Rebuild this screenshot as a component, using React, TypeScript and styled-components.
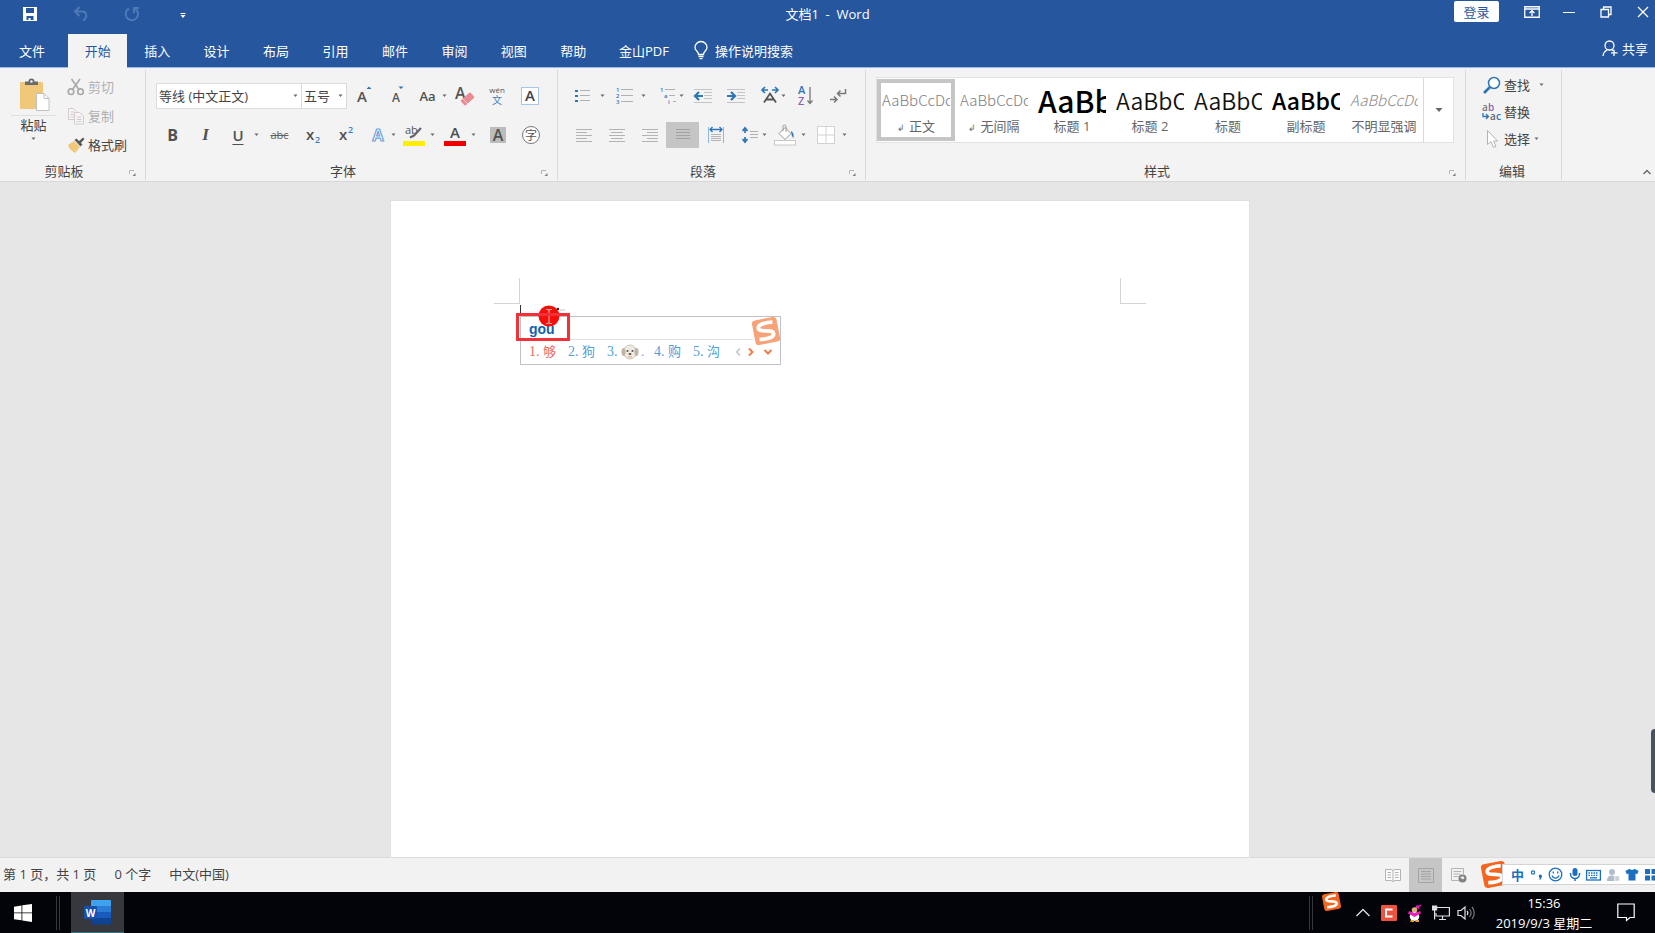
import React from 'react';
import styled, { createGlobalStyle, css } from 'styled-components';

const BLUE = '#26579e';
const INK = '#444444';
const UI = '"Open Sans", "Noto Sans CJK SC", sans-serif';
const SAMPLE = '"Noto Sans CJK SC", sans-serif';

const GlobalStyle = createGlobalStyle`
  * { box-sizing: border-box; }
  html, body { margin: 0; padding: 0; }
  body { font-family: ${UI}; font-size: 13px; line-height: 18px; color: ${INK}; overflow: hidden; }
  button, select, input { font: inherit; color: inherit; margin: 0; padding: 0; border: 0; background: none; }
  svg { display: block; flex: none; overflow: visible; }
`;

const Shell = styled.div`
  display: flex;
  flex-direction: column;
  min-height: 100vh;
`;

/* ---------- title bar ---------- */

const TitleBar = styled.header`
  display: grid;
  grid-template-columns: 1fr auto 1fr;
  height: 34px;
  background: ${BLUE};
  color: #ffffff;
`;
const QuickAccess = styled.div`
  display: flex;
  align-items: center;
  padding: 0 0 6px 4px;
`;
const QuickButton = styled.button<{ $dim?: boolean }>`
  display: flex;
  align-items: center;
  justify-content: center;
  width: 51px;
  height: 24px;
  color: ${(p) => (p.$dim ? '#4f79b6' : '#ffffff')};
`;
const DocTitle = styled.h1`
  margin: 0;
  padding: 5px 0;
  font-size: 13px;
  line-height: 18px;
  font-weight: 400;
  white-space: pre;
`;
const WindowControls = styled.div`
  display: flex;
  align-items: flex-start;
  justify-content: flex-end;
`;
const LoginButton = styled.button`
  width: 45px;
  height: 21px;
  margin: 1px 14px 0 0;
  border-radius: 2px;
  background: #ffffff;
  color: ${BLUE};
  line-height: 20px;
`;
const WindowButton = styled.button`
  display: flex;
  align-items: center;
  justify-content: center;
  width: 37px;
  height: 24px;
  &:last-child { width: 31px; padding-left: 6px; }
`;

/* ---------- tabs ---------- */

const TabBar = styled.nav`
  display: flex;
  height: 34px;
  background: ${BLUE};
  border-bottom: 1px solid #9dbbe0;
  color: #ffffff;
`;
const FileTab = styled.button`
  width: 64px;
  margin-right: 4px;
`;
const TabList = styled.div`
  display: grid;
  grid-template-columns: repeat(9, 1fr);
  width: 535px;
`;
const Tab = styled.button<{ $active?: boolean }>`
  ${(p) =>
    p.$active &&
    css`
      background: #f3f3f3;
      color: ${BLUE};
      margin-bottom: -1px;
      padding-bottom: 1px;
    `}
`;
const WideTab = styled.button`
  width: 82px;
`;
const TellMe = styled.button`
  display: flex;
  align-items: center;
  gap: 7px;
  padding: 0 0 0 9px;
`;
const ShareButton = styled.button`
  display: flex;
  align-items: center;
  gap: 4px;
  margin-left: auto;
  padding: 0 7px 4px 0;
`;

/* ---------- ribbon ---------- */

const Ribbon = styled.section`
  display: flex;
  height: 114px;
  padding: 2px 0 1px;
  background: #f3f3f3;
  border-bottom: 1px solid #d8d8d8;
`;
const Group = styled.div<{ $w?: number }>`
  display: flex;
  flex-direction: column;
  ${(p) => (p.$w ? `width: ${p.$w}px; flex: none;` : 'flex: 1; min-width: 0;')}
  border-right: 1px solid #d9d9d9;
`;
const GroupBody = styled.div`
  display: flex;
  flex: 1;
`;
const GroupFooter = styled.div`
  display: flex;
  align-items: center;
  height: 18px;
  padding-right: 3px;
`;
const GroupLabel = styled.span`
  flex: 1;
  line-height: 16px;
  text-align: center;
`;
const Launcher = styled.button`
  display: flex;
  align-items: flex-end;
  width: 14px;
  height: 12px;
`;
const RibbonEnd = styled.div`
  display: flex;
  align-items: flex-end;
  justify-content: flex-end;
  width: 93px;
  padding: 0 4px 5px 0;
`;

const PasteButton = styled.button`
  display: flex;
  flex-direction: column;
  align-items: center;
  width: 45px;
  height: 70px;
  margin: 8px 10px 0 11px;
`;
const PasteText = styled.span`
  width: 100%;
  margin: 4px 0 3px;
  border-top: 1px solid #dedede;
`;
const Stack = styled.div<{ $pitch: number; $top: number }>`
  display: flex;
  flex-direction: column;
  align-items: flex-start;
  padding-top: ${(p) => p.$top}px;
  > button { height: ${(p) => p.$pitch}px; }
`;
const TextButton = styled.button<{ $disabled?: boolean }>`
  display: flex;
  align-items: center;
  gap: 2px;
  color: ${(p) => (p.$disabled ? '#b0b0b0' : INK)};
`;
const IconSlot = styled.span`
  display: flex;
  justify-content: center;
  width: 20px;
`;
const CaretSlot = styled.span<{ $pad?: number }>`
  padding-left: ${(p) => p.$pad ?? 0}px;
`;

const Rows = styled.div<{ $left: number }>`
  display: flex;
  flex-direction: column;
  gap: 13px;
  padding: 13px 0 0 ${(p) => p.$left}px;
`;
const Row = styled.div`
  display: flex;
  align-items: center;
  height: 26px;
`;
const Combo = styled.label<{ $w: number }>`
  position: relative;
  display: flex;
  align-items: center;
  width: ${(p) => p.$w}px;
  height: 26px;
  background: #ffffff;
  border: 1px solid #dcdcdc;
  & + & { border-left: 0; }
  select {
    width: 100%;
    height: 24px;
    padding-left: 2px;
    appearance: none;
    outline: 0;
  }
  svg {
    position: absolute;
    right: 3px;
    top: 10px;
    pointer-events: none;
  }
`;
const ToolButton = styled.button<{ $w?: number; $gap?: number; $on?: boolean }>`
  display: flex;
  flex: none;
  align-items: center;
  justify-content: center;
  width: ${(p) => p.$w ?? 33}px;
  height: 26px;
  margin-left: ${(p) => p.$gap ?? 0}px;
  background: ${(p) => (p.$on ? '#c5c5c5' : 'transparent')};
`;
const Glyph = styled.span`
  display: flex;
  flex: 1;
  justify-content: center;
`;
const Letter = styled.span<{ $size?: number; $bold?: boolean; $italic?: boolean; $line?: string }>`
  font-size: ${(p) => p.$size ?? 16}px;
  font-weight: ${(p) => (p.$bold ? 700 : 600)};
  font-style: ${(p) => (p.$italic ? 'italic' : 'normal')};
  font-family: ${(p) => (p.$italic ? '"Liberation Serif", serif' : UI)};
  text-decoration: ${(p) => p.$line ?? 'none'};
  text-decoration-thickness: 1px;
  text-underline-offset: 3px;
  color: #505050;
`;
const ThinLetter = styled(Letter)`
  font-weight: 400;
  color: #606060;
`;

/* ---------- styles gallery ---------- */

const Gallery = styled.div`
  display: flex;
  flex: 1;
  height: 66px;
  margin: 7px 11px 0 10px;
  background: #ffffff;
  border: 1px solid #e2e2e2;
`;
const StyleList = styled.div`
  display: grid;
  grid-template-columns: repeat(7, 1fr);
  flex: 1;
  min-width: 0;
  padding: 1px 0 3px;
`;
const StyleCard = styled.button<{ $selected?: boolean }>`
  display: flex;
  flex-direction: column;
  align-items: center;
  min-width: 0;
  padding: 0 1px;
  border: 4px solid ${(p) => (p.$selected ? '#c5c5c5' : 'transparent')};
`;
const StyleSample = styled.span<{ $size: number; $tone: string; $italic?: boolean; $weight?: number }>`
  width: 100%;
  height: 34px;
  overflow: hidden;
  font-family: ${SAMPLE};
  font-size: ${(p) => p.$size}px;
  line-height: 34px;
  font-weight: ${(p) => p.$weight ?? 400};
  font-style: ${(p) => (p.$italic ? 'italic' : 'normal')};
  color: ${(p) => p.$tone};
  text-align: left;
  white-space: nowrap;
`;
const StyleName = styled.span`
  color: #666666;
  white-space: nowrap;
`;
const Mark = styled.small`
  margin-right: 4px;
  font-size: 9px;
`;
const GalleryMore = styled.button`
  display: flex;
  align-items: center;
  justify-content: center;
  width: 30px;
  border-left: 1px solid #d9d9d9;
`;

/* ---------- document ---------- */

const Workspace = styled.main`
  position: relative;
  display: flex;
  flex: 1;
  justify-content: center;
  padding: 18px 15px 0 0;
  background: #e6e6e6;
`;
const Page = styled.article`
  position: relative;
  width: 860px;
  background: #ffffff;
  border: 1px solid #e0e0e0;
  border-bottom: 0;
`;
const Margins = styled.div`
  display: flex;
  justify-content: space-between;
  padding: 77px 103px 0;
`;
const Corner = styled.span<{ $side: 'left' | 'right' }>`
  width: 26px;
  height: 26px;
  border-bottom: 1px solid #d4d4d4;
  border-${(p) => (p.$side === 'left' ? 'right' : 'left')}: 1px solid #d4d4d4;
`;
const TextCursor = styled.span`
  position: absolute;
  left: 129px;
  top: 104px;
  width: 1px;
  height: 20px;
  background: #333333;
`;
const ImePanel = styled.div`
  position: absolute;
  left: 129px;
  top: 115px;
  width: 261px;
  height: 49px;
  border: 1px solid #bfc0c8;
  background: #ffffff;
`;
const ImeInput = styled.div`
  height: 23px;
  margin: 0 27px 0 2px;
  padding: 3px 0 0 6px;
  border-bottom: 1px solid #e0e0e0;
  font: 700 14px/18px "Liberation Sans", sans-serif;
  color: #1260ae;
`;
const ImeLogo = styled.span`
  position: absolute;
  right: 0;
  top: 0;
  opacity: 0.6;
`;
const Candidates = styled.div`
  display: flex;
  align-items: center;
  height: 24px;
  padding-left: 8px;
`;
const Candidate = styled.button<{ $first?: boolean; $w?: number }>`
  display: flex;
  align-items: center;
  width: ${(p) => p.$w ?? 39}px;
  gap: 2px;
  font-family: "Liberation Serif", "Noto Sans CJK SC", serif;
  font-size: 13px;
  color: ${(p) => (p.$first ? '#ee6a5c' : '#4f9fd9')};
`;
const Num = styled.span`
  width: 12px;
  font-size: 14px;
  text-align: left;
`;
const Pager = styled.button<{ $w: number }>`
  display: flex;
  width: ${(p) => p.$w}px;
`;
const Highlight = styled.div`
  position: absolute;
  left: 125px;
  top: 112px;
  width: 54px;
  height: 28px;
  border: 3px solid #f23037;
`;
const Pointer = styled.span`
  position: absolute;
  left: 147px;
  top: 104px;
`;
const SideHandle = styled.button`
  position: absolute;
  right: 0;
  bottom: 64px;
  width: 4px;
  height: 64px;
  border-radius: 4px 0 0 4px;
  background: #465362;
`;

/* ---------- status bar ---------- */

const StatusBar = styled.footer`
  position: relative;
  display: flex;
  align-items: center;
  height: 35px;
  padding-left: 3px;
  background: #f2f2f2;
  border-top: 1px solid #dadada;
`;
const StatusText = styled.span`
  margin-right: 18px;
  padding-bottom: 2px;
`;
const Views = styled.div`
  display: flex;
  align-self: stretch;
  margin-left: auto;
  padding-right: 180px;
`;
const ViewButton = styled.button<{ $on?: boolean }>`
  display: flex;
  align-items: center;
  justify-content: center;
  width: 33px;
  background: ${(p) => (p.$on ? '#c6c6c6' : 'transparent')};
`;
const ImeBar = styled.div`
  position: absolute;
  right: 0;
  top: 2px;
  display: flex;
  align-items: center;
  width: 174px;
  height: 29px;
`;
const ImeBarBody = styled.div`
  display: flex;
  align-items: center;
  flex: 1;
  height: 21px;
  margin-left: -6px;
  background: #ffffff;
  border: 1px solid #d4d4d4;
  border-right: 0;
  overflow: hidden;
`;
const ImeBarButton = styled.button<{ $first?: boolean }>`
  display: flex;
  flex: none;
  align-items: center;
  justify-content: center;
  width: 19px;
  height: 19px;
  margin-left: ${(p) => (p.$first ? 5 : 0)}px;
  font-size: 13px;
  font-weight: 700;
  color: #1b6fc0;
`;

/* ---------- task bar ---------- */

const TaskBar = styled.footer`
  display: flex;
  height: 41px;
  background: #02040a;
  color: #ffffff;
`;
const StartButton = styled.button`
  display: flex;
  align-items: center;
  justify-content: center;
  width: 46px;
`;
const Grip = styled.span`
  width: 4px;
  margin: 4px 0 3px 10px;
  border: 1px solid #35373c;
  border-width: 0 1px;
`;
const TaskButton = styled.button`
  display: flex;
  align-items: center;
  justify-content: center;
  width: 53px;
  margin-left: 11px;
  background: #36383d;
  border-bottom: 1px solid #2f7480;
`;
const Tray = styled.div`
  display: flex;
  align-items: center;
  margin-left: auto;
`;
const TrayGrip = styled(Grip)`
  align-self: stretch;
  margin-left: 0;
`;
const TrayButton = styled.button<{ $w: number; $top?: boolean }>`
  display: flex;
  justify-content: center;
  align-self: ${(p) => (p.$top ? 'flex-start' : 'center')};
  width: ${(p) => p.$w}px;
`;
const Clock = styled.time`
  display: flex;
  flex-direction: column;
  gap: 2px;
  text-align: center;
`;

/* ---------- drawings ---------- */

const Caret = () => (
  <svg width="5" height="4" viewBox="0 0 5 4"><path d="M.5 .5h4L2.500 3z" fill="#6a6a6a" /></svg>
);

const SogouLogo = ({ size }: { size: number }) => (
  <svg width={size} height={size} viewBox="0 0 28 28">
    <g transform="rotate(-11 14 14)">
      <rect x="1.500" y="1.500" width="25" height="25" rx="3.500" fill="#f4651f" />
      <path d="M22 6.500C17 5.500 7 5.500 7 10c0 5 14 2.500 14 8 0 4.500-10 4-15 3" fill="none" stroke="#fff" strokeWidth="3.800" />
    </g>
  </svg>
);

const Lines = ({ rows, color = '#b3b3b3' }: { rows: [number, number][]; color?: string }) => (
  <svg width="18" height="18" viewBox="0 0 18 18">
    {rows.map(([a, b], i) => (
      <path key={i} d={`M${a} ${3.5 + i * 3}H${b}`} stroke={color} />
    ))}
  </svg>
);

const LauncherIcon = () => (
  <svg width="9" height="9" viewBox="0 0 9 9" fill="none" stroke="#b4b4b4">
    <path d="M1.500 6V2.500H6" /><path d="M7.500 5v3H4.500z" fill="#7a7a7a" stroke="none" />
  </svg>
);

const PasteIcon = () => (
  <svg width="32" height="33" viewBox="0 0 32 33">
    <rect x="2" y="4" width="23" height="27" rx="1" fill="#f1c77a" />
    <path d="M7 7V3.500h3.500a3 3 0 0 1 6 0H20V7z" fill="#6a6a6a" />
    <circle cx="13.500" cy="3.500" r="1.200" fill="#f3f3f3" />
    <path d="M18.500 15.500h7.500l5 5v12H18.500z" fill="#fff" stroke="#c0c0c0" /><path d="M26 15.500v5h5" fill="none" stroke="#c0c0c0" />
  </svg>
);
const CutIcon = () => (
  <svg width="18" height="18" viewBox="0 0 18 18" fill="none" stroke="#a8a8a8" strokeWidth="1.600">
    <circle cx="4" cy="13.700" r="2.800" /><circle cx="13.500" cy="13.700" r="2.800" /><path d="M4.500 1l7.500 10.500M13 1L5.500 11.500" />
  </svg>
);
const CopyIcon = () => (
  <svg width="18" height="18" viewBox="0 0 18 18" fill="#f8f5f6" stroke="#d3cbce">
    <path d="M1.500 1.500h5l3 3v8h-8z" /><path d="M3.500 5h4M3.500 7.500h4M3.500 10h4" /><path d="M7.500 5.500h5l4 3.500v8h-9z" /><path d="M9.500 10h5M9.500 12.500h5M9.500 14.500h5" />
  </svg>
);
const BrushIcon = () => (
  <svg width="18" height="16" viewBox="0 0 18 16">
    <path d="M1 8l6-4 6 6-5 6C5 14 2 12 1 8z" fill="#f1c77a" /><path d="M7.500 3l2-1.500 6 6-2 2z" fill="#5a5a5a" /><path d="M11 5l5-4.500 1.500 1.500L13 7z" fill="#5a5a5a" />
  </svg>
);
const GrowIcon = ({ up }: { up?: boolean }) => (
  <svg width="22" height="22" viewBox="0 0 22 22">
    <text x={up ? 4 : 6} y="17" fontFamily={UI} fontWeight="600" fontSize={up ? 15 : 12} fill="#555">A</text>
    <path d={up ? 'M13.500 4l2.500-2.500L18.500 4z' : 'M12.500 1.500h5L15 4z'} fill="#2e75b6" />
  </svg>
);
const EraserIcon = () => (
  <svg width="22" height="22" viewBox="0 0 22 22">
    <text x="2" y="14" fontFamily={UI} fontWeight="600" fontSize="16" fill="#555">A</text>
    <rect x="8" y="10.500" width="13" height="7" rx="1" transform="rotate(-42 14.500 14)" fill="#ea8b94" />
    <path d="M9.500 13.500l5.500 5.500" stroke="#f8d2d6" />
  </svg>
);
const PinyinIcon = () => (
  <svg width="22" height="22" viewBox="0 0 22 22" textAnchor="middle" fontFamily={UI}>
    <text x="11" y="8" fontSize="8" fill="#555">wén</text><text x="11" y="19" fontSize="10" fill="#3c7fc4">文</text>
  </svg>
);
const BoxedA = () => (
  <svg width="20" height="20" viewBox="0 0 20 20" textAnchor="middle">
    <rect x="1.500" y="1.500" width="17" height="17" fill="#fff" stroke="#a9c6e6" /><text x="10" y="15" fontFamily={UI} fontWeight="600" fontSize="15" fill="#444">A</text>
  </svg>
);
const ShadedA = () => (
  <svg width="20" height="20" viewBox="0 0 20 20" textAnchor="middle">
    <rect x="2" y="2" width="16" height="16" fill="#bcbcbc" /><text x="10" y="16" fontFamily={UI} fontWeight="600" fontSize="16" fill="#505050">A</text>
  </svg>
);
const CircledChar = () => (
  <svg width="20" height="20" viewBox="0 0 20 20" textAnchor="middle">
    <circle cx="10" cy="10" r="8.500" fill="#fff" stroke="#777" /><text x="10" y="14.500" fontFamily={UI} fontSize="12" fill="#555">字</text>
  </svg>
);
const ScriptIcon = ({ sup }: { sup?: boolean }) => (
  <svg width="20" height="22" viewBox="0 0 20 22" fontFamily={UI} fontWeight="600">
    <text x="3" y="16" fontSize="15" fill="#505050">x</text><text x="12" y={sup ? 9 : 19} fontSize="9" fill="#3c7fc4">2</text>
  </svg>
);
const OutlineA = () => (
  <svg width="18" height="20" viewBox="0 0 18 20" textAnchor="middle">
    <text x="8" y="16" fontFamily={UI} fontWeight="700" fontSize="16" fill="#fff" stroke="#6fa3dc" strokeWidth="1.200">A</text>
  </svg>
);
const MarkerIcon = () => (
  <svg width="22" height="22" viewBox="0 0 22 22">
    <text x="2" y="10" fontFamily={UI} fontSize="11" fill="#555">ab</text><path d="M18 4L11 11.500l-4 2" stroke="#666" strokeWidth="2.200" fill="none" /><rect y="17" width="22" height="5" fill="#ffee00" />
  </svg>
);
const FontColorIcon = () => (
  <svg width="22" height="22" viewBox="0 0 22 22" textAnchor="middle">
    <text x="11" y="14" fontFamily={UI} fontWeight="600" fontSize="15" fill="#505050">A</text><rect y="17" width="22" height="5" fill="#ee0000" />
  </svg>
);
const BulletIcon = () => (
  <svg width="18" height="18" viewBox="0 0 18 18">
    {[3, 8, 13].map((y) => <g key={y}><rect x="1" y={y} width="3" height="2" fill="#2e75b6" /><path d={`M6 ${y + .5}h10`} stroke="#b0b0b0" /></g>)}
  </svg>
);
const NumberIcon = () => (
  <svg width="20" height="20" viewBox="0 0 20 20">
    {[4, 10, 16].map((y, i) => <g key={y}><text x="1" y={y + 2} fontSize="6" fontWeight="600" fontFamily={UI} fill="#2e75b6">{i + 1}</text><path d={`M6 ${y - .5}h12`} stroke="#b0b0b0" /></g>)}
  </svg>
);
const MultiIcon = () => (
  <svg width="18" height="20" viewBox="0 0 18 20">
    {['1', 'a', 'i'].map((t, i) => <g key={t}><text x={1 + i * 4} y={6 + i * 6} fontSize="6" fontWeight="600" fontFamily={UI} fill="#2e75b6">{t}</text><path d={`M${6 + i * 4} ${3.5 + i * 6}H${i === 2 ? 17 : 16}`} stroke="#b0b0b0" /></g>)}
  </svg>
);
const IndentIcon = ({ out }: { out?: boolean }) => (
  <svg width="20" height="18" viewBox="0 0 20 18" fill="none">
    <path d="M1 2.500h18M11 5.500h8M11 8.500h8M11 11.500h8M1 15.500h18" stroke="#c4c4c4" />
    <path d={out ? 'M10 9H3M6 5L2 9l4 4' : 'M1 9h7M5 5l4 4-4 4'} stroke="#2e75b6" strokeWidth="2.200" />
  </svg>
);
const AsianLayoutIcon = () => (
  <svg width="18" height="20" viewBox="0 0 18 20" fill="none">
    <path d="M7 4H2M4 1L1 4l3 3M11 4h5M14 1l3 3-3 3" stroke="#2e75b6" strokeWidth="1.600" /><path d="M3 16.500L9 7.500l6 9M5.500 13.500h7" stroke="#555" strokeWidth="1.800" />
  </svg>
);
const SortIcon = () => (
  <svg width="18" height="22" viewBox="0 0 18 22" fontFamily={UI} fontWeight="600" fontSize="11">
    <text x="2" y="9" fill="#2e75b6">A</text><text x="2" y="20" fill="#8f5fb5">Z</text><path d="M14 2v16M11.500 15.500L14 18.500l2.500-3" stroke="#777" fill="none" strokeWidth="1.300" />
  </svg>
);
const MarksIcon = () => (
  <svg width="18" height="18" viewBox="0 0 18 18" fill="none" stroke="#777" strokeWidth="1.500">
    <path d="M16.500 2v4.500H9M11.500 3.500L8.500 6.500l3 3M1 12.500h7M5 9.500l3 3-3 3" />
  </svg>
);
const DistributeIcon = () => (
  <svg width="18" height="18" viewBox="0 0 18 18" fill="none">
    <path d="M1.500 1v16M16.500 1v16" stroke="#8db8e4" /><path d="M3 3.500h12M5.500 1L3 3.500 5.500 6M12.500 1L15 3.500 12.500 6" stroke="#2e75b6" strokeWidth="1.300" /><path d="M4 8.500h10M4 10.500h10M4 12.500h10M4 14.500h10" stroke="#b4b4b4" />
  </svg>
);
const SpacingIcon = () => (
  <svg width="18" height="18" viewBox="0 0 18 18" fill="none">
    <path d="M4 2v5M4 11v5M1.500 5L4 1.800 6.500 5M1.500 13L4 16.200 6.500 13" stroke="#2e75b6" strokeWidth="1.700" /><path d="M9 5.500h8M9 8.500h8M9 11.500h8" stroke="#b0b0b0" />
  </svg>
);
const FillIcon = () => (
  <svg width="22" height="22" viewBox="0 0 22 22" fill="none">
    <path d="M11 3.500l6 6-6 6-6-6z" fill="#fff" stroke="#9a9a9a" /><path d="M9 7V2.500a1.500 1.500 0 0 1 3 0V8" stroke="#9a9a9a" /><path d="M17 7c2 1 3 3 2.500 7-1.500-1-2-3-2.500-7z" fill="#2e75b6" /><rect x=".5" y="16.500" width="21" height="4.500" fill="#fff" stroke="#c8c8c8" />
  </svg>
);
const BorderIcon = () => (
  <svg width="20" height="20" viewBox="0 0 20 20" stroke="#d2d2d2">
    <rect x="1.500" y="1.500" width="17" height="17" fill="#fff" /><path d="M10 1v18M1 10h18" />
  </svg>
);
const FindIcon = () => (
  <svg width="18" height="18" viewBox="0 0 18 18" fill="none" stroke="#2e75b6">
    <circle cx="11" cy="7" r="5.500" strokeWidth="1.500" fill="#fff" /><path d="M7 11L1 17" strokeWidth="2.600" />
  </svg>
);
const ReplaceIcon = () => (
  <svg width="20" height="20" viewBox="0 0 20 20" fontFamily={UI} fontSize="10" fontWeight="600">
    <text x="0" y="9" fill="#777">a</text><text x="6" y="9" fill="#8f5fb5">b</text><text x="8" y="18" fill="#666">a</text><text x="14" y="18" fill="#2e75b6">c</text><path d="M1 11v3.500h5M4 12l2.500 2.500L4 17" fill="none" stroke="#2e75b6" strokeWidth="1.300" />
  </svg>
);
const SelectIcon = () => (
  <svg width="14" height="20" viewBox="0 0 14 20"><path d="M2.500 1.500v14l3.500-3 2.500 6 2.500-1.200-2.500-5.300h4z" fill="#fff" stroke="#b4b4b4" /></svg>
);

const DogIcon = () => (
  <svg width="18" height="16" viewBox="0 0 18 16">
    <ellipse cx="9" cy="8" rx="6.500" ry="7" fill="#efe9df" stroke="#cfc6ba" /><ellipse cx="2.500" cy="8" rx="2" ry="4" fill="#bfb4a8" /><ellipse cx="15.500" cy="8" rx="2" ry="4" fill="#bfb4a8" />
    <circle cx="6.500" cy="7" r="1" fill="#555" /><circle cx="11.500" cy="7" r="1" fill="#555" /><ellipse cx="9" cy="10" rx="1.500" ry="1.100" fill="#555" /><path d="M7 12.500q2 1.500 4 0" stroke="#d9a79e" fill="none" />
  </svg>
);

const WordIcon = () => (
  <svg width="27" height="25" viewBox="0 0 27 25">
    <rect x="7" y="0" width="20" height="6.500" rx="1" fill="#3fa2ee" /><rect x="7" y="6" width="20" height="6.500" fill="#2b7cd6" /><rect x="7" y="12" width="20" height="6.500" fill="#185abd" /><rect x="7" y="18" width="20" height="6.500" rx="1" fill="#0f4292" />
    <rect x="0" y="6" width="13" height="13" rx="1" fill="#1650ac" /><text x="6.500" y="16.500" textAnchor="middle" fontFamily={UI} fontWeight="700" fontSize="10" fill="#fff">W</text>
  </svg>
);

const styleCards = [
  { name: '正文', mark: true, sample: 'AaBbCcDc', size: 15, tone: '#7d7d7d', weight: 300 },
  { name: '无间隔', mark: true, sample: 'AaBbCcDc', size: 15, tone: '#7d7d7d', weight: 300 },
  { name: '标题 1', sample: 'AaBb', size: 30, tone: '#000000', weight: 500 },
  { name: '标题 2', sample: 'AaBbC', size: 23, tone: '#111111', weight: 350 },
  { name: '标题', sample: 'AaBbC', size: 23, tone: '#111111', weight: 350 },
  { name: '副标题', sample: 'AaBbC', size: 23, tone: '#000000', weight: 500 },
  { name: '不明显强调', sample: 'AaBbCcDc', size: 15, tone: '#8a8a8a', weight: 300, italic: true },
];

const tabs = ['开始', '插入', '设计', '布局', '引用', '邮件', '审阅', '视图', '帮助'];

const Split = ({ label, w, gap, children }: { label: string; w: number; gap?: number; children: React.ReactNode }) => (
  <ToolButton aria-label={label} $w={w} $gap={gap}>
    <Glyph>{children}</Glyph>
    <Caret />
  </ToolButton>
);

const Footer = ({ label }: { label: string }) => (
  <GroupFooter>
    <GroupLabel>{label}</GroupLabel>
    <Launcher aria-label={`${label}设置`}><LauncherIcon /></Launcher>
  </GroupFooter>
);

export default function App() {
  return (
    <Shell>
      <GlobalStyle />
      <TitleBar>
        <QuickAccess>
          <QuickButton aria-label="保存">
            <svg width="16" height="16" viewBox="0 0 16 16"><path d="M1 1h14v14H1z" fill="#fff" /><path d="M4 2h8v5H4zM4.500 10h7v4h-7z" fill={BLUE} /><path d="M6.500 12h2v2h-2z" fill="#fff" /></svg>
          </QuickButton>
          <QuickButton aria-label="撤消" $dim>
            <svg width="16" height="16" viewBox="0 0 16 16" fill="none" stroke="currentColor" strokeWidth="2"><path d="M6.500 1L2 5.500 6.500 10M2 5.500h7c5 0 6 6 1 9" /></svg>
          </QuickButton>
          <QuickButton aria-label="重复" $dim>
            <svg width="16" height="16" viewBox="0 0 16 16" fill="none" stroke="currentColor" strokeWidth="2"><path d="M5 2.500A6.200 6.200 0 1 0 11.500 3M10 7V2h5" /></svg>
          </QuickButton>
          <QuickButton aria-label="自定义快速访问工具栏">
            <svg width="6" height="2" viewBox="0 0 6 2" fill="#fff"><path d="M.5 0h5v1H.5zM.5 2h5L3 5z" /></svg>
          </QuickButton>
        </QuickAccess>
        <DocTitle>{'文档1  -  Word'}</DocTitle>
        <WindowControls>
          <LoginButton>登录</LoginButton>
          <WindowButton aria-label="功能区显示选项">
            <svg width="16" height="12" viewBox="0 0 16 12" fill="none" stroke="#fff"><path d="M.75.75h14.500v10.500H.75zM1 3h14" strokeWidth="1.300" /><path d="M8 10V5M5.500 7L8 4.700 10.500 7" strokeWidth="1.300" /></svg>
          </WindowButton>
          <WindowButton aria-label="最小化">
            <svg width="12" height="12" viewBox="0 0 12 12" stroke="#fff"><path d="M0 6.500h12" /></svg>
          </WindowButton>
          <WindowButton aria-label="还原">
            <svg width="12" height="12" viewBox="0 0 12 12" fill="none" stroke="#fff" strokeWidth="1.300"><path d="M1 3.500h7.500V11H1zM3.500 3.500V1H11v7.500H8.500" /></svg>
          </WindowButton>
          <WindowButton aria-label="关闭">
            <svg width="12" height="12" viewBox="0 0 12 12" stroke="#fff" strokeWidth="1.300"><path d="M1 1l10 10M11 1L1 11" /></svg>
          </WindowButton>
        </WindowControls>
      </TitleBar>

      <TabBar>
        <FileTab>文件</FileTab>
        <TabList>
          {tabs.map((t, i) => <Tab key={t} $active={i === 0}>{t}</Tab>)}
        </TabList>
        <WideTab>金山PDF</WideTab>
        <TellMe>
          <svg width="14" height="19" viewBox="0 0 14 19" fill="none" stroke="#fff" strokeWidth="1.300"><path d="M4.500 13.500C4.500 10 1 10 1 6.500a6 6 0 0 1 12 0c0 3.500-3.500 3.500-3.500 7zM4.500 15.500h5M5.500 17.700h3" /></svg>
          操作说明搜索
        </TellMe>
        <ShareButton>
          <svg width="16" height="17" viewBox="0 0 16 17" fill="none" stroke="#fff" strokeWidth="1.300"><circle cx="7.500" cy="5.500" r="4.500" /><path d="M1 16c.5-3.500 2-5 4-6M10 10l1 .8M12 9.500v6.500M9 12.800h6.500" /></svg>
          共享
        </ShareButton>
      </TabBar>

      <Ribbon>
        <Group $w={146}>
          <GroupBody>
            <PasteButton>
              <PasteIcon />
              <PasteText>粘贴</PasteText>
              <Caret />
            </PasteButton>
            <Stack $top={2} $pitch={29}>
              <TextButton $disabled><IconSlot><CutIcon /></IconSlot>剪切</TextButton>
              <TextButton $disabled><IconSlot><CopyIcon /></IconSlot>复制</TextButton>
              <TextButton><IconSlot><BrushIcon /></IconSlot>格式刷</TextButton>
            </Stack>
          </GroupBody>
          <Footer label="剪贴板" />
        </Group>

        <Group $w={412}>
          <GroupBody>
            <Rows $left={10}>
              <Row>
                <Combo $w={146}>
                  <select aria-label="字体"><option>等线 (中文正文)</option></select>
                  <Caret />
                </Combo>
                <Combo $w={45}>
                  <select aria-label="字号"><option>五号</option></select>
                  <Caret />
                </Combo>
                <ToolButton aria-label="增大字号"><GrowIcon up /></ToolButton>
                <ToolButton aria-label="减小字号"><GrowIcon /></ToolButton>
                <Split label="更改大小写" w={34}><Letter $size={13}>Aa</Letter></Split>
                <ToolButton aria-label="清除格式"><EraserIcon /></ToolButton>
                <ToolButton aria-label="拼音指南"><PinyinIcon /></ToolButton>
                <ToolButton aria-label="字符边框"><BoxedA /></ToolButton>
              </Row>
              <Row>
                <ToolButton><Letter $bold>B</Letter></ToolButton>
                <ToolButton><Letter $bold $italic $size={17}>I</Letter></ToolButton>
                <Split label="下划线" w={37}><Letter $size={15} $line="underline">U</Letter></Split>
                <ToolButton $gap={4}><ThinLetter $size={11} $line="line-through">abc</ThinLetter></ToolButton>
                <ToolButton aria-label="下标"><ScriptIcon /></ToolButton>
                <ToolButton aria-label="上标"><ScriptIcon sup /></ToolButton>
                <Split label="文本效果" w={29} gap={5}><OutlineA /></Split>
                <Split label="突出显示" w={38} gap={1}><MarkerIcon /></Split>
                <Split label="字体颜色" w={38} gap={3}><FontColorIcon /></Split>
                <ToolButton aria-label="字符底纹" $gap={5}><ShadedA /></ToolButton>
                <ToolButton aria-label="带圈字符"><CircledChar /></ToolButton>
              </Row>
            </Rows>
          </GroupBody>
          <Footer label="字体" />
        </Group>

        <Group $w={308}>
          <GroupBody>
            <Rows $left={8}>
              <Row>
                <Split label="项目符号" w={39}><BulletIcon /></Split>
                <Split label="编号" w={38} gap={3}><NumberIcon /></Split>
                <Split label="多级列表" w={28} gap={10}><MultiIcon /></Split>
                <ToolButton aria-label="减少缩进量" $gap={2}><IndentIcon out /></ToolButton>
                <ToolButton aria-label="增加缩进量"><IndentIcon /></ToolButton>
                <Split label="中文版式" w={28} gap={6}><AsianLayoutIcon /></Split>
                <ToolButton aria-label="排序" $gap={2}><SortIcon /></ToolButton>
                <ToolButton aria-label="显示编辑标记"><MarksIcon /></ToolButton>
              </Row>
              <Row>
                <ToolButton aria-label="左对齐" $gap={1}><Lines rows={[[1, 17], [1, 12], [1, 17], [1, 12], [1, 17]]} /></ToolButton>
                <ToolButton aria-label="居中"><Lines rows={[[1, 17], [3, 15], [1, 17], [3, 15], [1, 17]]} /></ToolButton>
                <ToolButton aria-label="右对齐"><Lines rows={[[1, 17], [6, 17], [1, 17], [6, 17], [1, 17]]} /></ToolButton>
                <ToolButton aria-label="两端对齐" $on><Lines color="#a2a2a2" rows={[[2, 16], [2, 16], [2, 16], [2, 16]]} /></ToolButton>
                <ToolButton aria-label="分散对齐"><DistributeIcon /></ToolButton>
                <Split label="行距" w={30} gap={5}><SpacingIcon /></Split>
                <Split label="底纹" w={38} gap={1}><FillIcon /></Split>
                <Split label="边框" w={38} gap={3}><BorderIcon /></Split>
              </Row>
            </Rows>
          </GroupBody>
          <Footer label="段落" />
        </Group>

        <Group>
          <GroupBody>
            <Gallery>
              <StyleList>
                {styleCards.map((s, i) => (
                  <StyleCard key={s.name} $selected={i === 0}>
                    <StyleSample $size={s.size} $tone={s.tone} $weight={s.weight} $italic={s.italic}>{s.sample}</StyleSample>
                    <StyleName>{s.mark && <Mark>↲</Mark>}{s.name}</StyleName>
                  </StyleCard>
                ))}
              </StyleList>
              <GalleryMore aria-label="其他样式">
                <svg width="8" height="5" viewBox="0 0 8 5"><path d="M.5 0h7L4 4z" fill="#666" /></svg>
              </GalleryMore>
            </Gallery>
          </GroupBody>
          <Footer label="样式" />
        </Group>

        <Group $w={96}>
          <GroupBody>
            <Stack $top={1} $pitch={27}>
              <TextButton><CaretSlot $pad={14} /><IconSlot><FindIcon /></IconSlot>查找<CaretSlot $pad={7}><Caret /></CaretSlot></TextButton>
              <TextButton><CaretSlot $pad={14} /><IconSlot><ReplaceIcon /></IconSlot>替换</TextButton>
              <TextButton><CaretSlot $pad={14} /><IconSlot><SelectIcon /></IconSlot>选择<CaretSlot $pad={2}><Caret /></CaretSlot></TextButton>
            </Stack>
          </GroupBody>
          <GroupFooter><GroupLabel>编辑</GroupLabel></GroupFooter>
        </Group>
        <RibbonEnd>
          <button aria-label="折叠功能区">
            <svg width="8" height="6" viewBox="0 0 8 6" fill="none" stroke="#666" strokeWidth="1.400"><path d="M.5 5L4 1.500 7.500 5" /></svg>
          </button>
        </RibbonEnd>
      </Ribbon>

      <Workspace>
        <Page>
          <Margins><Corner $side="left" /><Corner $side="right" /></Margins>
          <TextCursor />
          <ImePanel>
            <ImeInput>gou</ImeInput>
            <ImeLogo><SogouLogo size={28} /></ImeLogo>
            <Candidates>
              <Candidate $first><Num>1.</Num>够</Candidate>
              <Candidate><Num>2.</Num>狗</Candidate>
              <Candidate $w={47}><Num>3.</Num><DogIcon />.</Candidate>
              <Candidate><Num>4.</Num>购</Candidate>
              <Candidate $w={42}><Num>5.</Num>沟</Candidate>
              <Pager aria-label="上一页" $w={13}><svg width="6" height="10" viewBox="0 0 6 10" fill="none" stroke="#c4c4c4" strokeWidth="1.500"><path d="M5 1.500L1.500 5 5 8.500" /></svg></Pager>
              <Pager aria-label="下一页" $w={15}><svg width="6" height="10" viewBox="0 0 6 10" fill="none" stroke="#ee7c48" strokeWidth="2"><path d="M1 1.500L4.500 5 1 8.500" /></svg></Pager>
              <Pager aria-label="展开" $w={10}><svg width="10" height="6" viewBox="0 0 10 6" fill="none" stroke="#ee7c48" strokeWidth="2"><path d="M1.500 1L5 4.500 8.500 1" /></svg></Pager>
            </Candidates>
          </ImePanel>
          <Pointer>
            <svg width="28" height="22" viewBox="0 0 28 22">
              <circle cx="11" cy="11" r="10.500" fill="#f50f08" />
              <path d="M8 4.500h2l1 1 1-1h2M11 5.500v12M8 18.500h2l1-1 1 1h2" fill="none" stroke="#c9a49c" strokeWidth="1.200" />
              <circle cx="20" cy="4" r="1.200" fill="#222" /><path d="M22 5h5" stroke="#c4c4c4" />
            </svg>
          </Pointer>
          <Highlight />
        </Page>
        <SideHandle aria-label="侧边栏" />
      </Workspace>

      <StatusBar>
        <StatusText>第 1 页，共 1 页</StatusText>
        <StatusText>0 个字</StatusText>
        <StatusText>中文(中国)</StatusText>
        <Views>
          <ViewButton aria-label="阅读视图">
            <svg width="16" height="15" viewBox="0 0 16 15" fill="#fafafa" stroke="#b4b4b4"><path d="M.5 1.500H6l2 1 2-1h5.500v11H10l-2 1-2-1H.5zM8 2.500v11M2.500 4.500h3.500M2.500 7h3.500M2.500 9.500h3.500M10 4.500h3.500M10 7h3.500M10 9.500h3.500" /></svg>
          </ViewButton>
          <ViewButton aria-label="页面视图" $on>
            <svg width="16" height="15" viewBox="0 0 16 15" fill="none" stroke="#a4a4a4"><path d="M.5.5h15v14H.5zM3 3.500h10M3 6h10M3 8.500h10M3 11h10" /></svg>
          </ViewButton>
          <ViewButton aria-label="Web 版式视图">
            <svg width="16" height="15" viewBox="0 0 16 15" fill="none" stroke="#b4b4b4"><path d="M8 12.500H.5V.5h12V6M2.500 3.500h8M2.500 6h7M2.500 8.500h5" /><circle cx="11.500" cy="10.500" r="4" fill="#808080" stroke="none" /><path d="M9 9.500l3-1.500 1.500 2-1.500 1.500" fill="#e8e8e8" stroke="none" /></svg>
          </ViewButton>
        </Views>
        <ImeBar>
          <SogouLogo size={27} />
          <ImeBarBody>
            <ImeBarButton $first>中</ImeBarButton>
            <ImeBarButton aria-label="中文标点">
              <svg width="15" height="14" viewBox="0 0 15 14"><circle cx="4" cy="4.500" r="1.600" fill="none" stroke="#1b6fc0" strokeWidth="1.200" /><path d="M10 7a1.700 1.700 0 1 1 2.500 2.500c-.3 1.500-1 2.200-2.500 2.700.8-.9 1-1.500.8-2.200-.8-.3-1.200-1.500-.8-3z" fill="#1b6fc0" /></svg>
            </ImeBarButton>
            <ImeBarButton aria-label="表情">
              <svg width="15" height="15" viewBox="0 0 15 15" fill="none" stroke="#1b6fc0" strokeWidth="1.300"><circle cx="7.500" cy="7.500" r="6.300" /><path d="M5.300 4.500v2M9.700 4.500v2M4 8.500c1.500 3.500 5.500 3.500 7 0" /></svg>
            </ImeBarButton>
            <ImeBarButton aria-label="语音">
              <svg width="12" height="15" viewBox="0 0 12 15"><rect x="3.500" y="1" width="5" height="8" rx="2.500" fill="#1b6fc0" /><path d="M1.500 6v1a4.500 4.500 0 0 0 9 0V6M6 11.500V14" fill="none" stroke="#1b6fc0" strokeWidth="1.500" /></svg>
            </ImeBarButton>
            <ImeBarButton aria-label="软键盘">
              <svg width="15" height="12" viewBox="0 0 15 12" fill="none" stroke="#1b6fc0"><rect x=".6" y="1.500" width="13.800" height="9.500" strokeWidth="1.300" /><path d="M2.500 4h10M2.500 6.300h10" strokeDasharray="1.500 1" strokeWidth="1.300" /><path d="M4 8.800h7" strokeWidth="1.300" /></svg>
            </ImeBarButton>
            <ImeBarButton aria-label="账户">
              <svg width="14" height="14" viewBox="0 0 14 14" fill="#b3bccb"><circle cx="6" cy="4" r="3" /><path d="M1 13c0-4 2-5.500 5-5.500 1 0 2 .2 2.500.6V13z" /><path d="M9 8h4.500v5H9z" fill="#c9cfd9" stroke="#fff" strokeWidth=".5" /></svg>
            </ImeBarButton>
            <ImeBarButton aria-label="皮肤">
              <svg width="14" height="13" viewBox="0 0 14 13" fill="#1b6fc0"><path d="M4.500.8c1 1.500 4 1.500 5 0L13.500 3 12.300 6.200 10.500 5.500V12.500h-7V5.500l-1.800.7L.5 3z" /></svg>
            </ImeBarButton>
            <ImeBarButton aria-label="工具箱">
              <svg width="13" height="12" viewBox="0 0 13 12" fill="#1b6fc0"><path d="M1 0h5v5H1zM7.500 0h5v5h-5zM1 6.500h5v5H1zM7.500 6.500h5v5h-5z" /></svg>
            </ImeBarButton>
          </ImeBarBody>
        </ImeBar>
      </StatusBar>

      <TaskBar>
        <StartButton aria-label="开始">
          <svg width="18" height="18" viewBox="0 0 18 18" fill="#fff"><path d="M0 2.700l7.500-1.200v7H0zM8.300 1.300L18 0v8.500H8.300zM0 9.300h7.500v7L0 15.200zM8.300 9.300H18V18l-9.700-1.500z" /></svg>
        </StartButton>
        <Grip />
        <TaskButton aria-label="Word"><WordIcon /></TaskButton>
        <Tray>
          <TrayGrip />
          <TrayButton aria-label="搜狗输入法" $w={36} $top><SogouLogo size={19} /></TrayButton>
          <TrayButton aria-label="显示隐藏的图标" $w={27}><svg width="14" height="9" viewBox="0 0 14 9" fill="none" stroke="#ddd" strokeWidth="1.400"><path d="M.5 8L7 1.500 13.500 8" /></svg></TrayButton>
          <TrayButton aria-label="录屏" $w={25}><svg width="16" height="16" viewBox="0 0 16 16"><rect width="16" height="16" rx="1" fill="#ee5340" /><path d="M11.500 4.500H5v7h6.500" fill="none" stroke="#fff" strokeWidth="2" /></svg></TrayButton>
          <TrayButton aria-label="QQ" $w={27}>
            <svg width="14" height="18" viewBox="0 0 14 18"><path d="M8 4c1-4 2 0 5-3M9 2l2 3" stroke="#e81fb5" strokeWidth="1.500" fill="none" /><circle cx="6.500" cy="6" r="2.800" fill="#d8b27c" /><ellipse cx="6.500" cy="12.500" rx="4.800" ry="4.500" fill="#fff" /><path d="M1 7l5.500 2L12 7l1 2.500-3 1.500-3.500 2-3.500-2-3-1.500z" fill="#e81fb5" /><path d="M2.500 17h3.500M7.500 17H11" stroke="#f0a020" strokeWidth="1.800" /></svg>
          </TrayButton>
          <TrayButton aria-label="网络" $w={26}>
            <svg width="18" height="16" viewBox="0 0 18 16" fill="none" stroke="#e0e0e0" strokeWidth="1.200"><path d="M5 2.500h12.400v8.500H4V8M10.500 11v3.500M7 14.500h7" /><path d="M.6 1h4v4h-4zM2.600 5v9.500" fill="#e0e0e0" /></svg>
          </TrayButton>
          <TrayButton aria-label="音量" $w={24}>
            <svg width="18" height="16" viewBox="0 0 18 16" fill="none" stroke="#e0e0e0" strokeWidth="1.200"><path d="M1 5.500h3L8 2v12L4 10.500H1z" /><path d="M10 6c1 1.200 1 2.800 0 4" /><path d="M12.500 4c2 2.500 2 5.500 0 8M15 2c3 3.500 3 8.500 0 12" stroke="#7a7a7a" /></svg>
          </TrayButton>
          <TrayButton aria-label="时间" $w={132}>
            <Clock><span>15:36</span><span>2019/9/3 星期二</span></Clock>
          </TrayButton>
          <TrayButton aria-label="通知" $w={32}>
            <svg width="18" height="19" viewBox="0 0 18 19" fill="none" stroke="#fff" strokeWidth="1.200"><path d="M.8 1h16.400v13.500H13L9.500 17.500V14.500H.8z" /></svg>
          </TrayButton>
          <CaretSlot $pad={13} />
        </Tray>
      </TaskBar>
    </Shell>
  );
}
